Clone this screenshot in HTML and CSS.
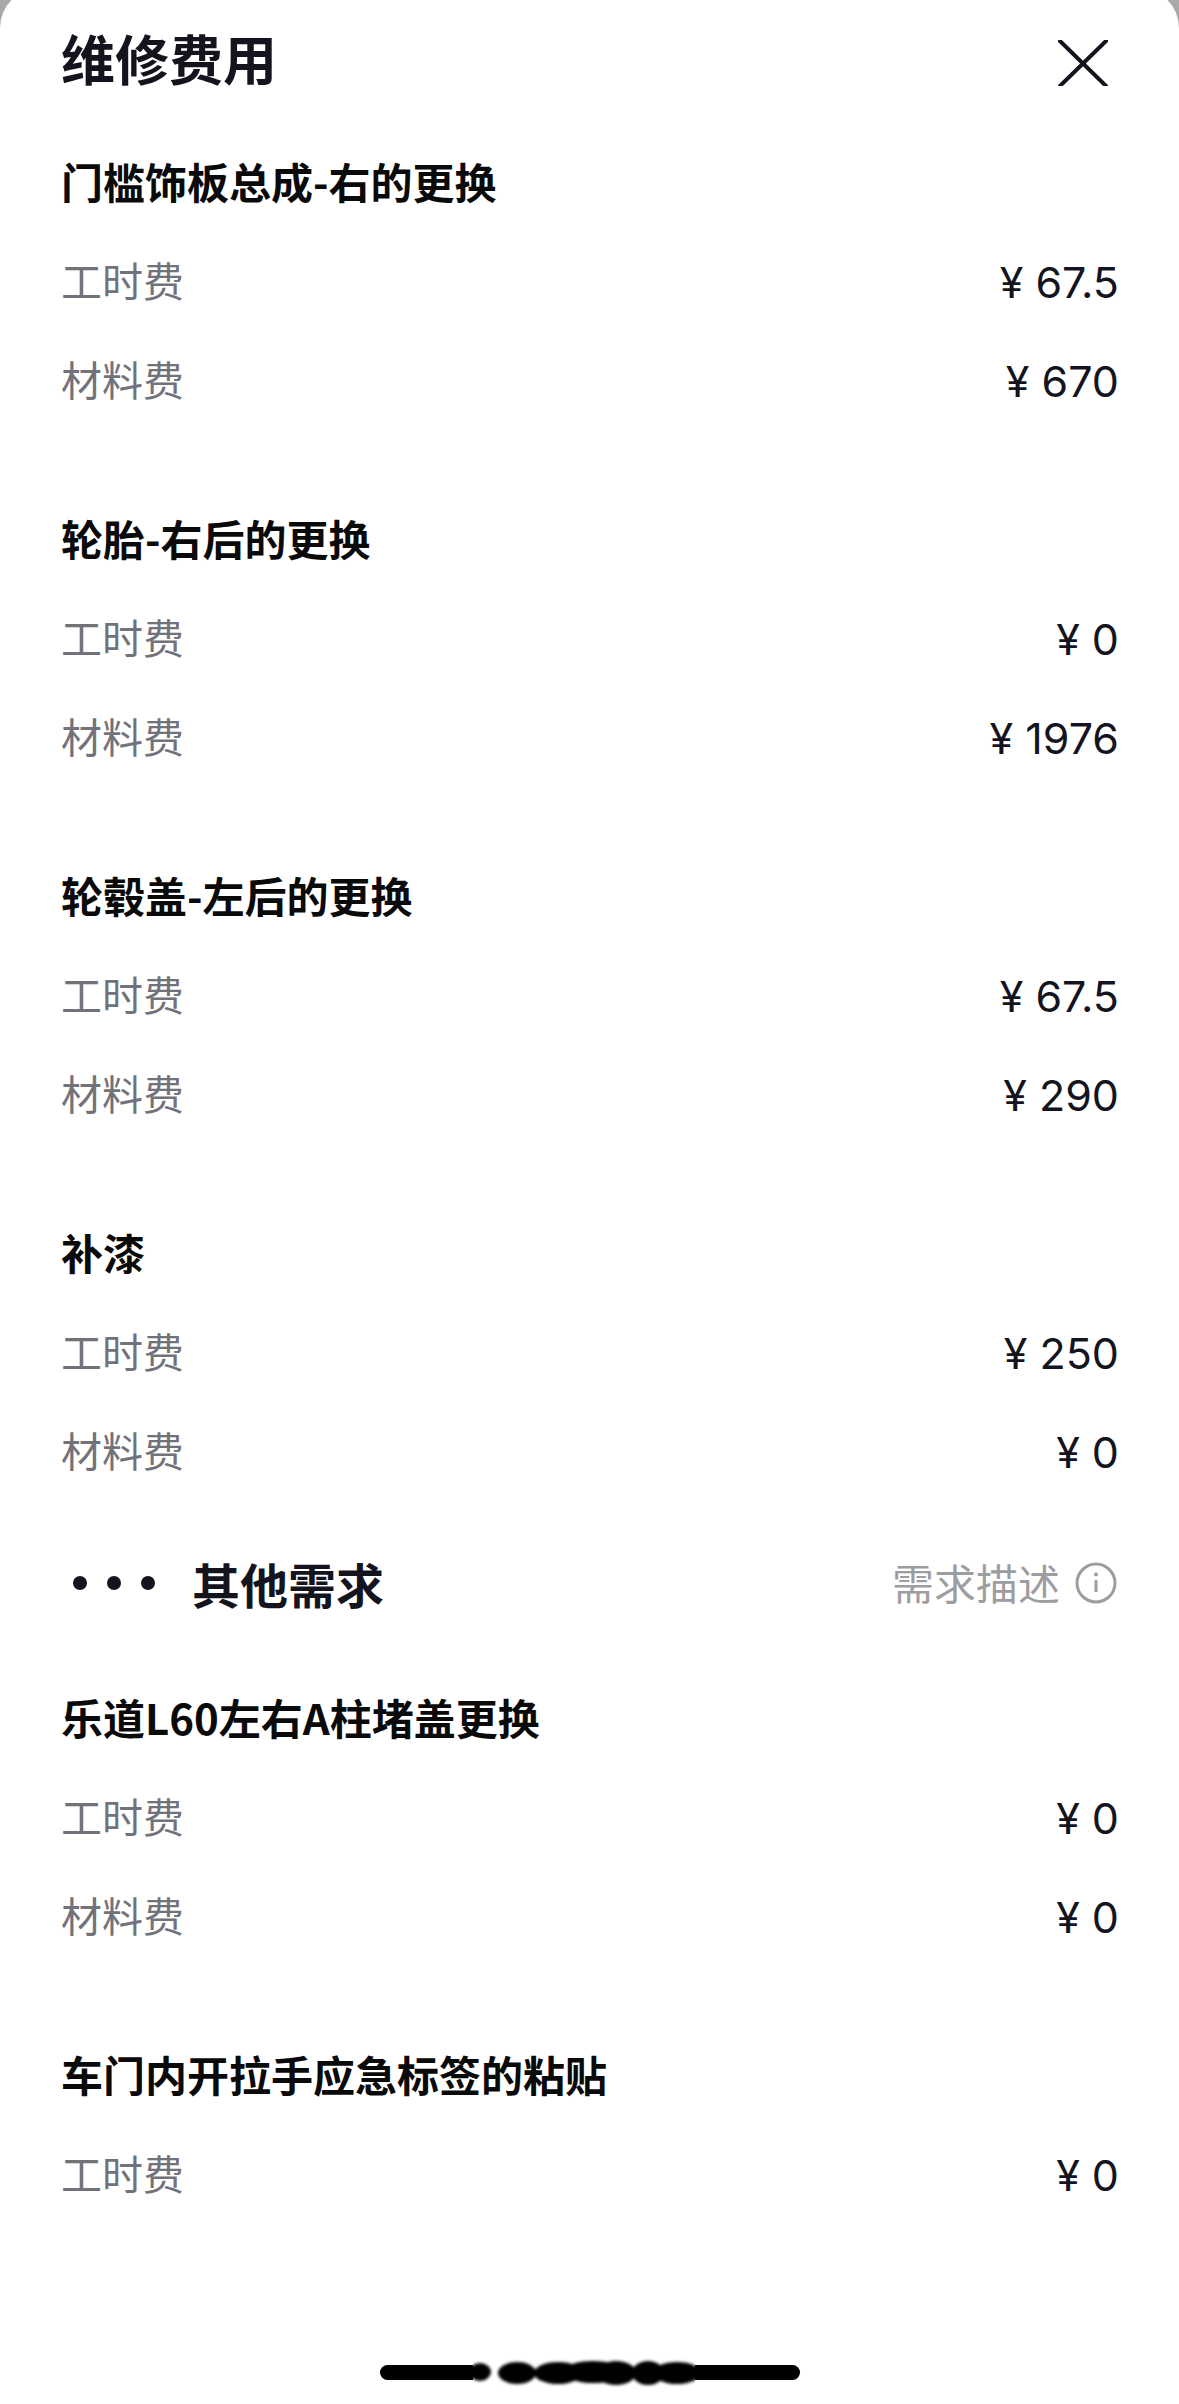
FILE: index.html
```html
<!DOCTYPE html>
<html lang="zh-CN">
<head>
  <meta charset="UTF-8" />
  <title>维修费用</title>
  <link rel="stylesheet" href="styles.css">
</head>
<body>
  <div class="sheet">

    <div class="sheet-header">
      <h1>维修费用</h1>
      <svg class="close-icon" width="50" height="46" viewBox="0 0 50 46">
        <path d="M2 1 L48 46 M48 1 L2 46" fill="none" stroke="#14141f" stroke-width="4" stroke-linecap="round"/>
      </svg>
    </div>

    <div class="group">
      <div class="group-title">门槛饰板总成-右的更换</div>
      <div class="row"><span class="label">工时费</span><span class="price">¥ 67.5</span></div>
      <div class="row"><span class="label">材料费</span><span class="price">¥ 670</span></div>
    </div>

    <div class="group">
      <div class="group-title">轮胎-右后的更换</div>
      <div class="row"><span class="label">工时费</span><span class="price">¥ 0</span></div>
      <div class="row"><span class="label">材料费</span><span class="price">¥ 1976</span></div>
    </div>

    <div class="group">
      <div class="group-title">轮毂盖-左后的更换</div>
      <div class="row"><span class="label">工时费</span><span class="price">¥ 67.5</span></div>
      <div class="row"><span class="label">材料费</span><span class="price">¥ 290</span></div>
    </div>

    <div class="group tight">
      <div class="group-title">补漆</div>
      <div class="row"><span class="label">工时费</span><span class="price">¥ 250</span></div>
      <div class="row"><span class="label">材料费</span><span class="price">¥ 0</span></div>
    </div>

    <div class="other-head">
      <div class="other-left">
        <div class="dots"><i></i><i></i><i></i></div>
        <h2>其他需求</h2>
      </div>
      <div class="other-right">
        <span class="label">需求描述</span>
        <svg width="42" height="42" viewBox="0 0 42 42">
          <circle cx="21" cy="21" r="19" fill="none" stroke="#9c9da1" stroke-width="3"/>
          <circle cx="21" cy="12.5" r="2" fill="#9c9da1"/>
          <path d="M21 18 V30" stroke="#9c9da1" stroke-width="3" fill="none"/>
        </svg>
      </div>
    </div>

    <div class="group first">
      <div class="group-title">乐道L60左右A柱堵盖更换</div>
      <div class="row"><span class="label">工时费</span><span class="price">¥ 0</span></div>
      <div class="row"><span class="label">材料费</span><span class="price">¥ 0</span></div>
    </div>

    <div class="group">
      <div class="group-title">车门内开拉手应急标签的粘贴</div>
      <div class="row"><span class="label">工时费</span><span class="price">¥ 0</span></div>
    </div>

  </div>

  <!-- home indicator, the middle is smudged by a watermark -->
  <div class="home-bar"></div>
  <svg class="smudge" width="222" height="50" viewBox="0 0 222 50">
    <defs><filter id="soft"><feGaussianBlur stdDeviation="1.5"/></filter></defs>
    <rect x="0" y="0" width="222" height="50" fill="#fff"/>
    <g filter="url(#soft)" fill="#000">
      <ellipse cx="7" cy="24" rx="11" ry="9"/>
      <ellipse cx="44" cy="25" rx="19" ry="11"/>
      <ellipse cx="85" cy="25" rx="24" ry="11"/>
      <ellipse cx="120" cy="24" rx="30" ry="11"/>
      <ellipse cx="143" cy="25" rx="20" ry="12"/>
      <ellipse cx="175" cy="25" rx="16" ry="12"/>
      <ellipse cx="204" cy="25" rx="24" ry="11"/>
    </g>
  </svg>
</body>
</html>
```

FILE: styles.css
```css
* { margin: 0; padding: 0; box-sizing: border-box; }

body {
  width: 1179px;
  height: 2404px;
  background: #a9a9a9;
  font-family: "Inter", "Noto Sans CJK SC", sans-serif;
  position: relative;
  overflow: hidden;
}

/* top edge sits a little above the crop, so the corners look small */
.sheet {
  height: 2416px;
  margin-top: -12px;
  background: #fff;
  border-radius: 40px 40px 0 0;
  padding: 0 60px 0 61px;
}

/* Title row */
.sheet-header {
  height: 143px;
  padding-top: 32px;
  display: flex;
  justify-content: space-between;
  align-items: flex-start;
}
.sheet-header h1 {
  font-size: 54px;
  line-height: 76px;
  font-weight: 700;
  color: #14141f;
  font-family: "Noto Sans CJK SC", sans-serif;
}
.close-icon { margin: 20px 11px 0 0; }

/* Fee groups */
.group { margin-bottom: 60px; }
.group.tight { margin-bottom: 0; }
.group.first { margin-top: 35px; }

.group-title {
  height: 99px;
  line-height: 99px;
  font-size: 42px;
  font-weight: 700;
  color: #0a0a0a;
  font-family: "Noto Sans CJK SC", sans-serif;
}

.row {
  height: 99px;
  display: flex;
  justify-content: space-between;
  align-items: center;
  font-size: 41px;
  color: #72737a;
}
.label {
  font-family: "Noto Sans CJK SC", sans-serif;
  padding-bottom: 2px;
}
.price {
  font-family: "Inter", sans-serif;
  font-size: 43px;
  color: #14141f;
  padding-top: 4px;
}

/* Other requirements heading */
.other-head {
  height: 99px;
  margin-top: 34px;
  display: flex;
  justify-content: space-between;
  align-items: center;
}
.other-left { display: flex; align-items: center; gap: 37px; }
.dots { display: flex; gap: 20px; margin-left: 12px; }
.dots i {
  width: 14px;
  height: 14px;
  border-radius: 50%;
  background: #14141f;
}
.other-left h2 {
  font-size: 48px;
  font-weight: 700;
  color: #14141f;
  font-family: "Noto Sans CJK SC", sans-serif;
}
.other-right {
  display: flex;
  align-items: center;
  gap: 15px;
  font-size: 42px;
  color: #9c9da1;
  margin-right: 2px;
}

/* Bottom bar */
.home-bar {
  position: absolute;
  left: 380px;
  top: 2365px;
  width: 420px;
  height: 15px;
  border-radius: 8px;
  background: #000;
}
.smudge {
  position: absolute;
  left: 473px;
  top: 2348px;
}
```
